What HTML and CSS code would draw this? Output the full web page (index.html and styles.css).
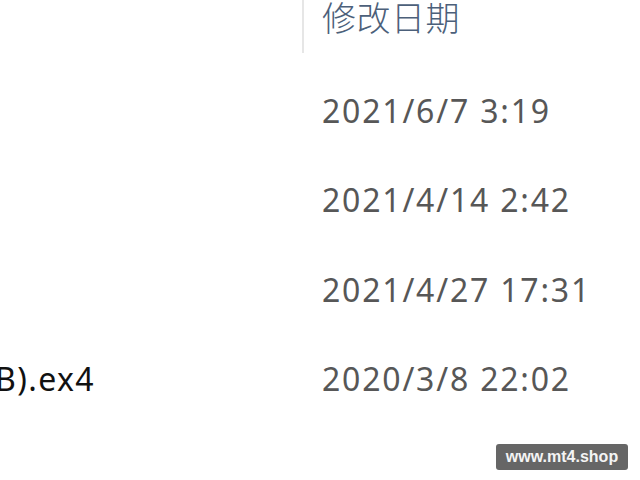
FILE: index.html
```html
<!DOCTYPE html>
<html lang="zh">
<head>
<meta charset="utf-8">
<link rel="stylesheet" href="styles.css">
</head>
<body>
<div class="explorer">
  <div class="header">
    <div class="col-name"></div>
    <div class="col-date head-text">修改日期</div>
  </div>
  <div class="row">
    <div class="col-name name-cell"><span class="name"></span></div>
    <div class="col-date date">2021/6/7 3:19</div>
  </div>
  <div class="row">
    <div class="col-name name-cell"><span class="name"></span></div>
    <div class="col-date date">2021/4/14 2:42</div>
  </div>
  <div class="row">
    <div class="col-name name-cell"><span class="name"></span></div>
    <div class="col-date date">2021/4/27 17:31</div>
  </div>
  <div class="row">
    <div class="col-name name-cell"><span class="name">Expert Advisor (B).ex4</span></div>
    <div class="col-date date">2020/3/8 22:02</div>
  </div>
</div>
<div class="watermark">www.mt4.shop</div>
</body>
</html>
```
FILE: styles.css
```css
html, body {
  margin: 0;
  padding: 0;
  background: #ffffff;
}
body {
  width: 640px;
  height: 480px;
  overflow: hidden;
  position: relative;
  font-family: "Noto Sans", "Noto Sans CJK SC", sans-serif;
  font-size: 32px;
}
.explorer {
  display: flex;
  flex-direction: column;
}
.header {
  display: flex;
  height: 66px;
  align-items: flex-start;
}
.header .col-name {
  height: 53px;
  border-right: 2px solid #e6e6e6;
  box-sizing: border-box;
}
.col-name {
  width: 304px;
  flex: none;
}
.col-date {
  padding-left: 18px;
}
.head-text {
  color: #4c607a;
  font-size: 34px;
  line-height: 36px;
  font-weight: 300;
  letter-spacing: 0.5px;
}
.row {
  display: flex;
  height: 89.3px;
  align-items: center;
}
.name-cell {
  width: 95px;
  display: flex;
  justify-content: flex-end;
  overflow: hidden;
  white-space: nowrap;
  margin-right: 209px;
}
.name {
  color: #111111;
  font-size: 32px;
  letter-spacing: 1.4px;
}
.date {
  color: #575757;
  letter-spacing: 1.8px;
}
.watermark {
  position: absolute;
  right: 12px;
  bottom: 10px;
  width: 132px;
  height: 26px;
  background: #666666;
  border-radius: 3px;
  color: #f4f4f4;
  font-family: "Liberation Sans", Arial, sans-serif;
  font-weight: bold;
  font-size: 16px;
  display: flex;
  align-items: center;
  justify-content: center;
}
```
